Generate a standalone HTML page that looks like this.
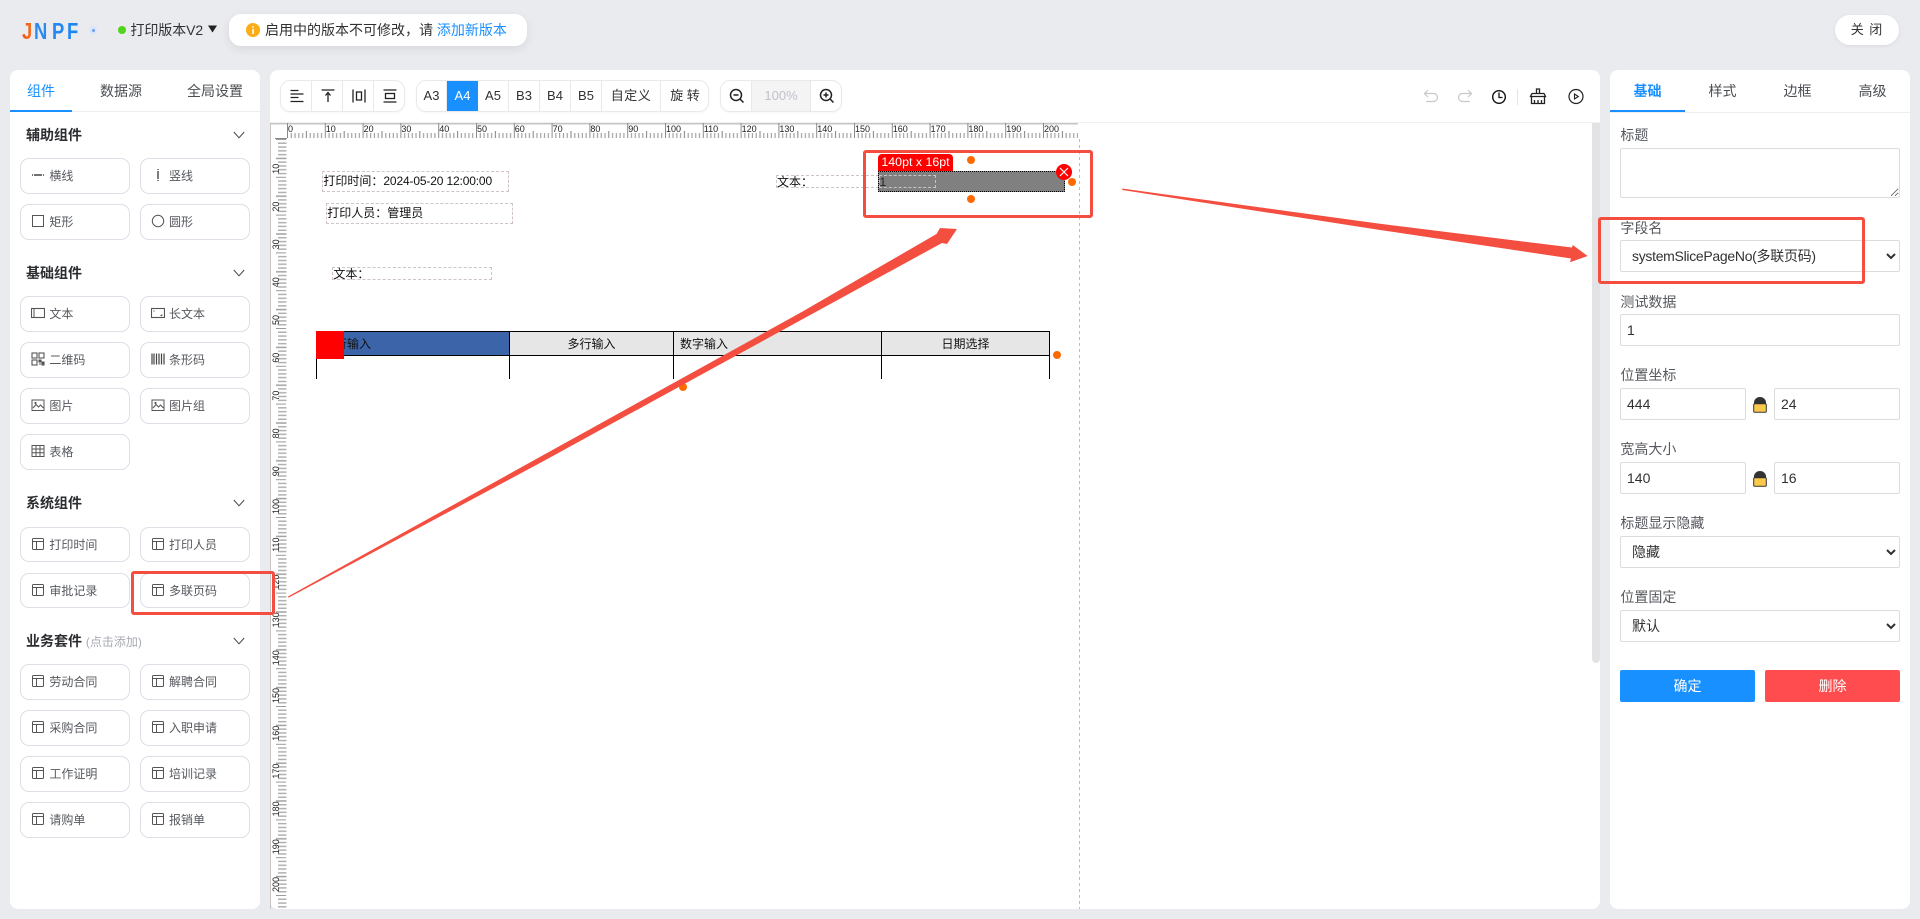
<!DOCTYPE html>
<html lang="zh">
<head>
<meta charset="utf-8">
<title>打印版本V2</title>
<style>
*{box-sizing:border-box}
html,body{margin:0;padding:0}
body{width:1920px;height:919px;overflow:hidden;background:#e9ebef;position:relative;font-family:"Liberation Sans","Noto Sans CJK SC",sans-serif;font-size:14px;color:#303133}
.a{position:absolute}
.panel{position:absolute;background:#fff;border-radius:8px}
.tab{position:absolute;top:80px;height:22px;line-height:22px;text-align:center;font-size:14px;color:#4a4d52}
.tab.on{color:#1890ff}
.h{position:absolute;left:26px;height:20px;line-height:20px;font-size:14px;font-weight:bold;color:#2b2d30}
.chev{position:absolute;left:232.5px;width:12px;height:8px}
.b{position:absolute;width:109.5px;height:35.4px;border:1px solid #dcdfe6;border-radius:9px;background:#fff;font-size:12px;color:#55585e;line-height:35px;padding-left:28px}
.b.r{left:140px}
.b.l{left:20.4px}
.b svg{position:absolute;left:9.5px;top:9px;width:14px;height:14px;fill:none;stroke:#555;stroke-width:1}
.grp{position:absolute;top:80px;height:32px;background:#fff;border:1px solid #e9e9ec;border-radius:10px;box-shadow:0 1px 2px rgba(0,0,0,.04);overflow:hidden}
.c{position:absolute;top:0;height:30px;line-height:30px;text-align:center;font-size:13px;color:#303133;border-right:1px solid #e9e9ec}
.c svg{position:absolute;left:7.5px;top:6.5px;width:16px;height:16px;fill:none;stroke:#222;stroke-width:1.3}
.lab{position:absolute;left:1620.4px;height:20px;line-height:20px;font-size:14px;color:#55585e}
input,select,textarea{position:absolute;margin:0;background:#fff;border:1px solid #dcdcdc;border-radius:2px;font-family:"Liberation Sans","Noto Sans CJK SC",sans-serif;font-size:14px;color:#303133;outline:none}
input{padding:0 6px}
select{padding:0 0 0 7px}
.dash{position:absolute;border:1px dashed #cfc3c6;font-size:12px;color:#111;white-space:nowrap}
.th{position:absolute;top:331px;height:24.5px;line-height:24px;font-size:12px;color:#111;background:#e6e6e6;border-top:1px solid #000;border-bottom:1px solid #000;border-right:1px solid #000}
.dot{position:absolute;width:8px;height:8px;border-radius:50%;background:#ff6a00}
.v{position:absolute;top:355px;height:24px;width:1px;background:#000}
.redbox{position:absolute;border:3px solid #f44e40;border-radius:3px}
.btn{position:absolute;top:670px;height:32px;line-height:32px;width:135px;border-radius:2px;color:#fff;text-align:center;font-size:14px}
</style>
</head>
<body>
<svg width="0" height="0" style="position:absolute">
<defs>
<symbol id="tpl" viewBox="0 0 14 14"><rect x="1.5" y="1.5" width="11" height="11" rx="1"/><path d="M1.5 4.5h11M5.5 4.5v8"/></symbol>
<symbol id="img" viewBox="0 0 14 14"><rect x="1" y="2" width="12" height="10.5"/><path d="M2 10l3-3.5 2.5 2.5 2-2 3 3"/><circle cx="4.5" cy="5" r=".6"/></symbol>
</defs>
</svg>

<!-- header -->
<svg class="a" style="left:20px;top:18px" width="64" height="24" viewBox="0 0 64 24">
<defs><linearGradient id="lg" x1="0" x2="1" y1="0" y2="0"><stop offset="0" stop-color="#f0541f"/><stop offset=".19" stop-color="#f4701c"/><stop offset=".21" stop-color="#2e8bf0"/><stop offset="1" stop-color="#1a86f0"/></linearGradient></defs>
<text transform="scale(.8 1)" x="2.5 17.5 40 58.75" y="21" font-family="Liberation Sans" font-size="23" font-weight="bold" fill="url(#lg)">JNPF</text>
</svg>
<div class="a" style="left:89px;top:26px;width:8px;height:8px;border-radius:50%;background:#dbe6fb"></div>
<div class="a" style="left:91.5px;top:28.5px;width:3px;height:3px;border-radius:50%;background:#6f9cf5"></div>
<div class="a" style="left:117.5px;top:26px;width:8px;height:8px;border-radius:50%;background:#52d41a"></div>
<div class="a" style="left:130.5px;top:20px;line-height:20px;font-size:14px;color:#303133;letter-spacing:-.1px">打印版本V2</div>
<svg class="a" style="left:207px;top:25px" width="11" height="8"><path d="M1 .5h9L5.5 7.5z" fill="#222"/></svg>
<div class="a" style="left:228.5px;top:14px;width:298px;height:32px;background:#fff;border-radius:12px;box-shadow:0 3px 10px rgba(0,0,0,.08)"></div>
<svg class="a" style="left:246px;top:23px" width="14" height="14"><circle cx="7" cy="7" r="7" fill="#faad14"/><rect x="6.2" y="6" width="1.6" height="5" fill="#fff"/><rect x="6.2" y="3.2" width="1.6" height="1.6" fill="#fff"/></svg>
<div class="a" style="left:265px;top:20px;line-height:20px;font-size:14px;color:#303133;white-space:nowrap">启用中的版本不可修改，请 <span style="color:#1890ff">添加新版本</span></div>
<div class="a" style="left:1835px;top:15px;width:64px;height:30px;background:#fff;border-radius:15px;box-shadow:0 1px 4px rgba(0,0,0,.07);text-align:center;line-height:30px;font-size:13px;letter-spacing:1px;color:#303133">关 闭</div>

<!-- left panel -->
<div class="panel" style="left:10px;top:70px;width:250px;height:839px"></div>
<div class="a" style="left:10px;top:111px;width:250px;height:1px;background:#eceef1"></div>
<div class="a" style="left:10px;top:110px;width:62px;height:2px;background:#1890ff"></div>
<div class="tab on" style="left:10px;width:62px">组件</div>
<div class="tab" style="left:91px;width:60px">数据源</div>
<div class="tab" style="left:180px;width:70px">全局设置</div>

<div class="h" style="top:125px">辅助组件</div>
<svg class="chev" style="top:131px"><path d="M.8 1L6 6.8 11.200 1" fill="none" stroke="#444" stroke-width="1"/></svg>
<div class="b l" style="top:158.3px"><svg viewBox="0 0 14 14" style="stroke:#444"><path d="M1 7h1M3 7h8M12 7h1" stroke-width="1.4"/></svg><span>横线</span></div>
<div class="b r" style="top:158.3px"><svg viewBox="0 0 14 14" style="stroke:#444"><path d="M7 1v1M7 3v8M7 12v1" stroke-width="1.4"/></svg><span>竖线</span></div>
<div class="b l" style="top:204.3px"><svg viewBox="0 0 14 14"><rect x="1.5" y="1.5" width="11" height="11"/></svg><span>矩形</span></div>
<div class="b r" style="top:204.3px"><svg viewBox="0 0 14 14"><circle cx="7" cy="7" r="5.7"/></svg><span>圆形</span></div>

<div class="h" style="top:263px">基础组件</div>
<svg class="chev" style="top:269px"><path d="M.8 1L6 6.8 11.200 1" fill="none" stroke="#444" stroke-width="1"/></svg>
<div class="b l" style="top:296.4px"><svg viewBox="0 0 14 14"><rect x=".5" y="2.5" width="13" height="9" stroke-width="1.1"/><path d="M3 2.5v9"/></svg><span>文本</span></div>
<div class="b r" style="top:296.4px"><svg viewBox="0 0 14 14"><rect x=".5" y="2.5" width="13" height="9" stroke-width="1.1"/><path d="M3 4.5v1M11 8.5v1M9.5 9.5h1.5" stroke-width="1.2"/></svg><span>长文本</span></div>
<div class="b l" style="top:342.4px"><svg viewBox="0 0 14 14" style="stroke-width:1.1"><rect x="1" y="1" width="5" height="5"/><rect x="8" y="1" width="5" height="5"/><rect x="1" y="8" width="5" height="5"/><path d="M8 8h2v2H8zM11 10h2v3h-2zM8 12h2" fill="#555"/></svg><span>二维码</span></div>
<div class="b r" style="top:342.4px"><svg viewBox="0 0 14 14" style="stroke:#444"><path d="M1 1.5v11M3 1.5v11M5.5 1.5v11M8 1.5v11M10.5 1.5v11M13 1.5v11" stroke-width="1.2"/></svg><span>条形码</span></div>
<div class="b l" style="top:388.4px"><svg viewBox="0 0 14 14"><use href="#img"/></svg><span>图片</span></div>
<div class="b r" style="top:388.4px"><svg viewBox="0 0 14 14"><use href="#img"/></svg><span>图片组</span></div>
<div class="b l" style="top:434.4px"><svg viewBox="0 0 14 14"><rect x="1" y="1.5" width="12" height="11"/><path d="M1 5h12M1 8.8h12M5 1.5v11M9 1.5v11"/></svg><span>表格</span></div>

<div class="h" style="top:493px">系统组件</div>
<svg class="chev" style="top:499px"><path d="M.8 1L6 6.8 11.200 1" fill="none" stroke="#444" stroke-width="1"/></svg>
<div class="b l" style="top:526.6px"><svg><use href="#tpl"/></svg><span>打印时间</span></div>
<div class="b r" style="top:526.6px"><svg><use href="#tpl"/></svg><span>打印人员</span></div>
<div class="b l" style="top:572.6px"><svg><use href="#tpl"/></svg><span>审批记录</span></div>
<div class="b r" style="top:572.6px"><svg><use href="#tpl"/></svg><span>多联页码</span></div>

<div class="h" style="top:631px">业务套件 <span style="font-weight:normal;font-size:12px;color:#a8abb2">(点击添加)</span></div>
<svg class="chev" style="top:637px"><path d="M.8 1L6 6.8 11.200 1" fill="none" stroke="#444" stroke-width="1"/></svg>
<div class="b l" style="top:664.4px"><svg><use href="#tpl"/></svg><span>劳动合同</span></div>
<div class="b r" style="top:664.4px"><svg><use href="#tpl"/></svg><span>解聘合同</span></div>
<div class="b l" style="top:710.4px"><svg><use href="#tpl"/></svg><span>采购合同</span></div>
<div class="b r" style="top:710.4px"><svg><use href="#tpl"/></svg><span>入职申请</span></div>
<div class="b l" style="top:756.4px"><svg><use href="#tpl"/></svg><span>工作证明</span></div>
<div class="b r" style="top:756.4px"><svg><use href="#tpl"/></svg><span>培训记录</span></div>
<div class="b l" style="top:802.4px"><svg><use href="#tpl"/></svg><span>请购单</span></div>
<div class="b r" style="top:802.4px"><svg><use href="#tpl"/></svg><span>报销单</span></div>

<!-- canvas panel -->
<div class="panel" style="left:270px;top:70px;width:1330px;height:839px"></div>
<div class="a" style="left:270px;top:122px;width:1330px;height:1px;background:#eff0f2"></div>
<div class="a" style="left:1592px;top:123px;width:8px;height:540px;background:#e3e3e6;border-radius:0 0 4px 4px"></div>

<!-- toolbar -->
<div class="grp" style="left:280px;width:125px">
 <div class="c" style="left:0;width:31px"><svg viewBox="0 0 16 16"><path d="M1.5 2.5h8M1.5 6h13M1.5 9.5h8M1.5 13.5h13"/></svg></div>
 <div class="c" style="left:31px;width:31px"><svg viewBox="0 0 16 16"><path d="M1.5 2h13M8 14V5M5.5 7.5L8 4.5l2.5 3"/></svg></div>
 <div class="c" style="left:62px;width:31px"><svg viewBox="0 0 16 16"><path d="M2 1.5v13M14 1.5v13"/><rect x="5.5" y="4" width="5" height="8"/></svg></div>
 <div class="c" style="left:93px;width:31px;border-right:0"><svg viewBox="0 0 16 16"><path d="M1.5 2h13M1.5 14h13"/><rect x="3.5" y="5.5" width="9" height="5"/></svg></div>
</div>
<div class="grp" style="left:416px;width:293px">
 <div class="c" style="left:0;width:30px">A3</div>
 <div class="c" style="left:30px;width:31px;background:#1890ff;color:#fff;border-right:0">A4</div>
 <div class="c" style="left:61px;width:31px">A5</div>
 <div class="c" style="left:92px;width:31px">B3</div>
 <div class="c" style="left:123px;width:31px">B4</div>
 <div class="c" style="left:154px;width:31px">B5</div>
 <div class="c" style="left:185px;width:59px;letter-spacing:.5px">自定义</div>
 <div class="c" style="left:244px;width:48px;border-right:0">旋 转</div>
</div>
<div class="grp" style="left:720px;width:122px">
 <div class="c" style="left:0;width:31px"><svg viewBox="0 0 16 16" style="stroke-width:1.5"><circle cx="7" cy="7" r="5.5"/><path d="M4.5 7h5M11 11l3.5 3.5"/></svg></div>
 <div class="c" style="left:31px;width:59px;background:#f4f4f5;color:#bfc2c8">100%</div>
 <div class="c" style="left:90px;width:31px;border-right:0"><svg viewBox="0 0 16 16" style="stroke-width:1.5"><circle cx="7" cy="7" r="5.5"/><path d="M4.5 7h5M7 4.5v5M11 11l3.5 3.5"/></svg></div>
</div>
<svg class="a" style="left:1420px;top:86px" width="170" height="22" viewBox="0 0 170 22" fill="none">
 <path d="M8 4L4.500 7.500 8 11M5 7.500h8.500a4 4 0 0 1 0 8H6" stroke="#c6c8cc" stroke-width="1.2"/>
 <path d="M48 4l3.500 3.500L48 11M51 7.500H42.500a4 4 0 0 0 0 8H50" stroke="#c6c8cc" stroke-width="1.2"/>
 <circle cx="79" cy="11" r="6.3" stroke="#111" stroke-width="1.4"/><path d="M79 6.5V11.5h3.5" stroke="#111" stroke-width="1.3"/>
 <path d="M97.5 3v16" stroke="#e2e4e7"/>
 <path d="M116.5 3h3v4.5h-3zM112 7.5h12l1.5 3h-15zM111.5 10.500v7h13v-7M114.500 14v3.500M118 14v3.500M121.500 14v3.500" stroke="#222" stroke-width="1.3"/>
 <circle cx="156" cy="10.500" r="7" stroke="#222" stroke-width="1.200"/><path d="M154.500 8v5l3.800-2.500z" stroke="#222" stroke-width="1.100"/>
</svg>

<!-- rulers -->
<svg class="a" style="left:270px;top:123px" width="812" height="786" viewBox="0 0 812 786">
<defs>
<pattern id="hr" x="17" y="0" width="37.8" height="16" patternUnits="userSpaceOnUse">
<path d="M.5 0v15" stroke="#8a8a8a" stroke-width="1"/>
<path d="M4.280 10v5M8.060 10v5M11.840 10v5M15.620 10v5M23.180 10v5M26.960 10v5M30.740 10v5M34.520 10v5" stroke="#9a9a9a" stroke-width="1.100"/>
<path d="M19.400 8v7" stroke="#8a8a8a" stroke-width="1.100"/>
</pattern>
<pattern id="vr" x="0" y="16" width="17" height="37.8" patternUnits="userSpaceOnUse">
<path d="M6 .5h10" stroke="#9a9a9a" stroke-width="1"/>
<path d="M8 4.280h8.500M8 8.060h8.500M8 11.840h8.500M8 15.620h8.500M8 23.180h8.500M8 26.960h8.500M8 30.740h8.500M8 34.520h8.500" stroke="#b0b0b0" stroke-width="1.500"/>
<path d="M6 19.400h10.500" stroke="#a0a0a0" stroke-width="1.500"/>
</pattern>
</defs>
<rect x="0" y="0" width="808" height="1.500" fill="#c9c3c3"/>
<rect x="0" y="0" width="1" height="786" fill="#c9c3c3"/>
<rect x="5" y="15" width="12" height="1" fill="#8a8a8a"/>
<rect x="17" y="0" width="791" height="16" fill="url(#hr)"/>
<rect x="0" y="16" width="17" height="770" fill="url(#vr)"/>
<path d="M809.500 16V786" stroke="#bdbdbd" stroke-dasharray="3 3"/>
<g font-family="Liberation Sans" font-size="9" fill="#222">
<text x="18" y="9">0</text><text x="55.800" y="9">10</text><text x="93.600" y="9">20</text><text x="131.400" y="9">30</text><text x="169.200" y="9">40</text><text x="207" y="9">50</text><text x="244.800" y="9">60</text><text x="282.600" y="9">70</text><text x="320.400" y="9">80</text><text x="358.200" y="9">90</text><text x="396" y="9">100</text><text x="433.800" y="9">110</text><text x="471.600" y="9">120</text><text x="509.400" y="9">130</text><text x="547.200" y="9">140</text><text x="585" y="9">150</text><text x="622.800" y="9">160</text><text x="660.600" y="9">170</text><text x="698.400" y="9">180</text><text x="736.200" y="9">190</text><text x="774" y="9">200</text>
<text transform="translate(9,50.800) rotate(-90)">10</text><text transform="translate(9,88.600) rotate(-90)">20</text><text transform="translate(9,126.400) rotate(-90)">30</text><text transform="translate(9,164.200) rotate(-90)">40</text><text transform="translate(9,202) rotate(-90)">50</text><text transform="translate(9,239.800) rotate(-90)">60</text><text transform="translate(9,277.600) rotate(-90)">70</text><text transform="translate(9,315.400) rotate(-90)">80</text><text transform="translate(9,353.200) rotate(-90)">90</text><text transform="translate(9,391) rotate(-90)">100</text><text transform="translate(9,428.800) rotate(-90)">110</text><text transform="translate(9,466.600) rotate(-90)">120</text><text transform="translate(9,504.400) rotate(-90)">130</text><text transform="translate(9,542.200) rotate(-90)">140</text><text transform="translate(9,580) rotate(-90)">150</text><text transform="translate(9,617.800) rotate(-90)">160</text><text transform="translate(9,655.600) rotate(-90)">170</text><text transform="translate(9,693.400) rotate(-90)">180</text><text transform="translate(9,731.200) rotate(-90)">190</text><text transform="translate(9,769) rotate(-90)">200</text>
</g>
</svg>

<!-- canvas elements -->
<div class="dash" style="left:322.400px;top:171.300px;width:186.500px;height:20.500px;line-height:18.500px">打印时间：<span style="letter-spacing:-.15px">2024-05-20 12:00:00</span></div>
<div class="dash" style="left:326.300px;top:203.300px;width:186.500px;height:20.500px;line-height:18.500px">打印人员：管理员</div>
<div class="dash" style="left:332.400px;top:267px;width:159.500px;height:13px;line-height:12px">文本：</div>
<div class="dash" style="left:776px;top:175.300px;width:102.500px;height:12.500px;line-height:12px;border-right:0">文本：</div>

<div class="a" style="left:878.300px;top:171.300px;width:187px;height:20.500px;background:#808080;border:1px dotted #000"></div>
<div class="a" style="left:878.500px;top:175.300px;width:57.500px;height:12.500px;border:1px dashed #c9c3c5;font-size:12px;line-height:12px;color:#222">1</div>
<div class="a" style="left:878px;top:154px;width:75px;height:17px;background:#f00;border-radius:4px 4px 0 0;color:#fff;font-size:12.400px;line-height:17px;text-align:center;white-space:nowrap">140pt x 16pt</div>
<div class="dot" style="left:966.700px;top:156px"></div>
<div class="dot" style="left:966.700px;top:195px"></div>
<div class="dot" style="left:1067.700px;top:178px"></div>
<svg class="a" style="left:1055.700px;top:164.300px" width="16" height="16"><circle cx="8" cy="8" r="8" fill="#f00"/><path d="M4 4l8 8M12 4l-8 8" stroke="#fff" stroke-width="1.200"/></svg>

<!-- table -->
<div class="th" style="left:316px;width:194px;background:#3c64a8;border-left:1px solid #000;padding-left:6px;color:#111">单行输入</div>
<div class="th" style="left:510px;width:164px;text-align:center">多行输入</div>
<div class="th" style="left:674px;width:208px;padding-left:6px">数字输入</div>
<div class="th" style="left:882px;width:168px;text-align:center">日期选择</div>
<div class="v" style="left:316px"></div>
<div class="v" style="left:509px"></div>
<div class="v" style="left:673px"></div>
<div class="v" style="left:881px"></div>
<div class="v" style="left:1049px"></div>
<div class="a" style="left:316px;top:331px;width:28px;height:28px;background:#f00"></div>
<div class="dot" style="left:679px;top:383px"></div>
<div class="dot" style="left:1052.700px;top:351px"></div>

<!-- right panel -->
<div class="panel" style="left:1610px;top:70px;width:300px;height:839px"></div>
<div class="a" style="left:1610px;top:112px;width:300px;height:1px;background:#eceef1"></div>
<div class="a" style="left:1610px;top:110px;width:75px;height:2px;background:#1890ff"></div>
<div class="tab on" style="left:1610px;width:75px;font-weight:bold">基础</div>
<div class="tab" style="left:1685px;width:75px">样式</div>
<div class="tab" style="left:1760px;width:75px">边框</div>
<div class="tab" style="left:1835px;width:75px">高级</div>

<div class="lab" style="top:125px">标题</div>
<textarea style="left:1620px;top:148px;width:280px;height:50px"></textarea>
<div class="lab" style="top:218px">字段名</div>
<select style="left:1620px;top:240px;width:280px;height:32px;letter-spacing:-.3px"><option>systemSlicePageNo(多联页码)</option></select>
<div class="lab" style="top:292px">测试数据</div>
<input value="1" style="left:1620px;top:314px;width:280px;height:32px">
<div class="lab" style="top:365px">位置坐标</div>
<input value="444" style="left:1620px;top:388px;width:126px;height:32px">
<input value="24" style="left:1774px;top:388px;width:126px;height:32px">
<svg class="a" style="left:1753px;top:397px" width="14" height="16"><path d="M1.500 7V5.500a5.500 5 0 0 1 11 0V7z" fill="#333" stroke="#333" stroke-width="1"/><rect x=".7" y="6.700" width="12.600" height="8.600" rx="1" fill="#fcc94a" stroke="#333" stroke-width="1"/></svg>
<div class="lab" style="top:439px">宽高大小</div>
<input value="140" style="left:1620px;top:462px;width:126px;height:32px">
<input value="16" style="left:1774px;top:462px;width:126px;height:32px">
<svg class="a" style="left:1753px;top:471px" width="14" height="16"><path d="M1.500 7V5.500a5.500 5 0 0 1 11 0V7z" fill="#333" stroke="#333" stroke-width="1"/><rect x=".7" y="6.700" width="12.600" height="8.600" rx="1" fill="#fcc94a" stroke="#333" stroke-width="1"/></svg>
<div class="lab" style="top:513px">标题显示隐藏</div>
<select style="left:1620px;top:536px;width:280px;height:32px"><option>隐藏</option></select>
<div class="lab" style="top:587px">位置固定</div>
<select style="left:1620px;top:610px;width:280px;height:32px"><option>默认</option></select>
<div class="btn" style="left:1620px;background:#1890ff">确定</div>
<div class="btn" style="left:1765px;background:#ff4d4f">删除</div>

<!-- annotations -->
<div class="redbox" style="left:130.700px;top:570.500px;width:144.500px;height:44px"></div>
<div class="redbox" style="left:862.700px;top:150px;width:230px;height:68px"></div>
<div class="redbox" style="left:1597.600px;top:217.300px;width:267px;height:67px"></div>
<svg class="a" style="left:0;top:0;pointer-events:none" width="1920" height="919">
<polygon fill="#f44e40" points="288,596.500 538,458 803,311.300 936.500,234 940,228 957,229 947,244 942,243 817,311.300 540,463 288.500,597.700"/>
<polygon fill="#f44e40" points="1122.300,188.500 1380,223.800 1572,247.500 1572.800,245 1587.600,256 1570,262.300 1571,258.500 1380,230 1122.300,190"/>
</svg>
</body>
</html>
